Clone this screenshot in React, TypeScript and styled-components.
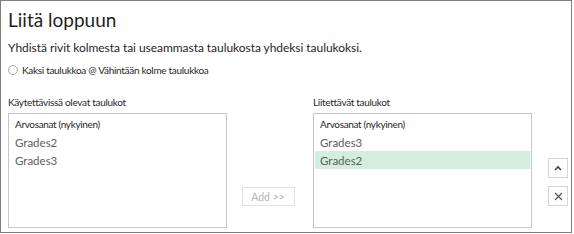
import React from 'react';
import styled, { createGlobalStyle } from 'styled-components';

const GlobalStyle = createGlobalStyle`
  html, body {
    margin: 0;
    padding: 0;
    background: #ffffff;
  }
  body {
    font-family: "Segoe UI", Lato, "Liberation Sans", sans-serif;
    color: #222222;
  }
`;

const Frame = styled.div`
  box-sizing: border-box;
  width: 572px;
  height: 233px;
  border: 1px solid #7f7f7f;
  padding: 6px 0 0 7px;
  display: flex;
  flex-direction: column;
`;

const Title = styled.h1`
  margin: 0;
  font-size: 19px;
  font-weight: 400;
  line-height: 26px;
  color: #1f1f1f;
`;

const Subtitle = styled.p`
  margin: 6px 0 0;
  font-size: 12px;
  letter-spacing: -0.05px;
  line-height: 17px;
  color: #1f1f1f;
`;

const RadioRow = styled.label`
  display: flex;
  align-items: center;
  gap: 4px;
  margin-top: 7px;
  font-size: 10px;
  letter-spacing: -0.3px;
  line-height: 14px;
  color: #1f1f1f;
`;

const RadioCircle = styled.span`
  box-sizing: border-box;
  width: 10px;
  height: 10px;
  border-radius: 50%;
  border: 1px solid #a8a8a8;
  background: #fdfdfd;
`;

const Columns = styled.div`
  display: flex;
  align-items: flex-start;
  margin-top: 18px;
`;

const Column = styled.div`
  display: flex;
  flex-direction: column;
`;

const ColumnLabel = styled.div`
  font-size: 10px;
  letter-spacing: -0.3px;
  line-height: 14px;
  color: #1f1f1f;
  margin-bottom: 4px;
`;

const ListBox = styled.div`
  box-sizing: border-box;
  width: 219px;
  height: 115px;
  border: 1px solid #c6c6c6;
  padding: 1px;
  display: flex;
  flex-direction: column;
`;

const ListItem = styled.div<{ $current?: boolean; $selected?: boolean }>`
  height: 18px;
  display: flex;
  align-items: center;
  padding-left: 5px;
  font-size: ${(p) => (p.$current ? '10px' : '11.5px')};
  letter-spacing: ${(p) => (p.$current ? '-0.35px' : '0')};
  color: ${(p) => (p.$current ? '#1f1f1f' : '#5e5e5e')};
  background: ${(p) => (p.$selected ? '#d3eedf' : 'transparent')};
`;

const Middle = styled.div`
  width: 86px;
  align-self: stretch;
  display: flex;
  align-items: flex-end;
  justify-content: center;
  padding-bottom: 22px;
  box-sizing: border-box;
`;

const AddButton = styled.button`
  box-sizing: border-box;
  width: 53px;
  height: 19px;
  border: 1px solid #e2e2e2;
  background: #ffffff;
  color: #b5b5b5;
  font-family: inherit;
  font-size: 10.5px;
  padding: 0;
  margin-left: -4px;
`;

const SideButtons = styled.div`
  display: flex;
  flex-direction: column;
  gap: 8px;
  margin-left: 16px;
  margin-top: 63px;
`;

const IconButton = styled.button`
  box-sizing: border-box;
  width: 20px;
  height: 20px;
  border: 1px solid #d6d6d6;
  background: #ffffff;
  padding: 0;
  display: flex;
  align-items: center;
  justify-content: center;
`;

export default function App() {
  return (
    <>
      <GlobalStyle />
      <Frame>
        <Title>Liitä loppuun</Title>
        <Subtitle>Yhdistä rivit kolmesta tai useammasta taulukosta yhdeksi taulukoksi.</Subtitle>
        <RadioRow>
          <RadioCircle />
          Kaksi taulukkoa @ Vähintään kolme taulukkoa
        </RadioRow>
        <Columns>
          <Column>
            <ColumnLabel>Käytettävissä olevat taulukot</ColumnLabel>
            <ListBox>
              <ListItem $current>Arvosanat (nykyinen)</ListItem>
              <ListItem>Grades2</ListItem>
              <ListItem>Grades3</ListItem>
            </ListBox>
          </Column>
          <Middle>
            <AddButton>Add &gt;&gt;</AddButton>
          </Middle>
          <Column>
            <ColumnLabel>Liitettävät taulukot</ColumnLabel>
            <ListBox>
              <ListItem $current>Arvosanat (nykyinen)</ListItem>
              <ListItem>Grades3</ListItem>
              <ListItem $selected>Grades2</ListItem>
            </ListBox>
          </Column>
          <SideButtons>
            <IconButton aria-label="Siirrä ylös">
              <svg width="8" height="6" viewBox="0 0 8 6">
                <path d="M1 5 L4 2 L7 5" fill="none" stroke="#444" strokeWidth="1.6" />
              </svg>
            </IconButton>
            <IconButton aria-label="Poista">
              <svg width="9" height="9" viewBox="0 0 9 9">
                <path d="M1 1 L8 8 M8 1 L1 8" fill="none" stroke="#555" strokeWidth="1.2" />
              </svg>
            </IconButton>
          </SideButtons>
        </Columns>
      </Frame>
    </>
  );
}
